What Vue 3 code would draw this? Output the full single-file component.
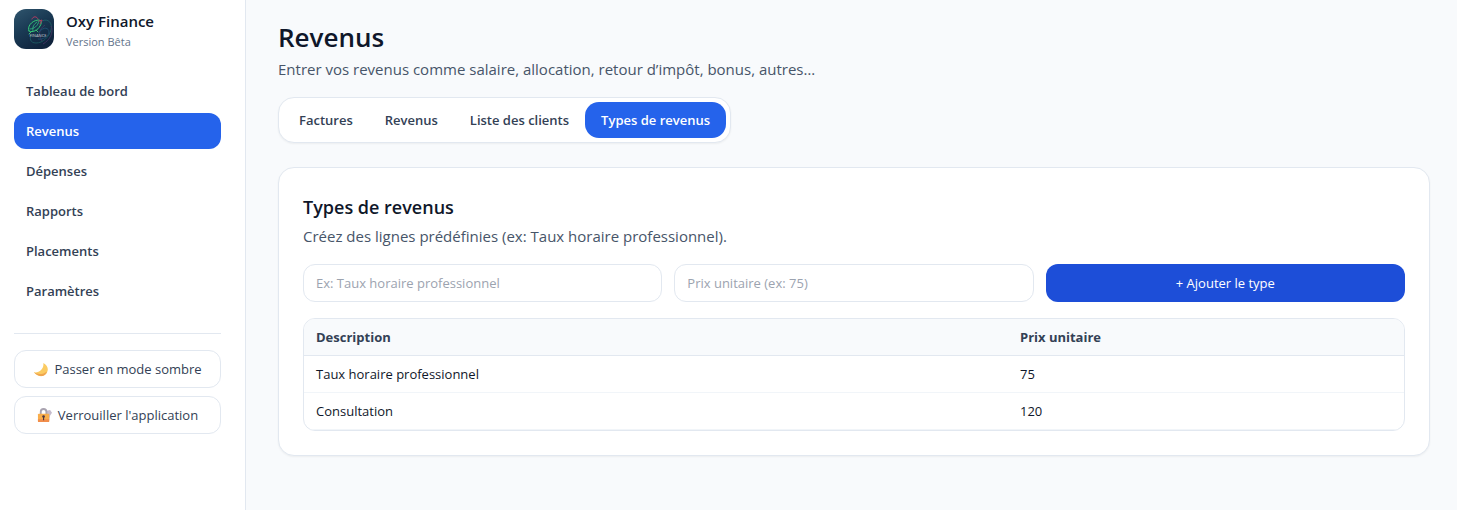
<script setup>
import { computed, ref } from 'vue'

const NAV_ITEMS = ['Tableau de bord', 'Revenus', 'Dépenses', 'Rapports', 'Placements', 'Paramètres']
const TABS = ['Factures', 'Revenus', 'Liste des clients', 'Types de revenus']

const activePage = ref('Revenus')
const activeTab = ref('Types de revenus')

const description = ref('')
const price = ref('')
const types = ref([
  { id: 1, description: 'Taux horaire professionnel', price: 75 },
  { id: 2, description: 'Consultation', price: 120 }
])

const nextId = computed(() => Math.max(0, ...types.value.map((t) => t.id)) + 1)

function addType() {
  const label = description.value.trim()
  if (!label) return
  types.value.push({ id: nextId.value, description: label, price: Number(price.value) || 0 })
  description.value = ''
  price.value = ''
}
</script>

<template>
  <div class="layout">
    <aside class="sidebar">
      <div class="brand">
        <svg class="brand-logo" viewBox="0 0 40 40" aria-hidden="true">
          <defs>
            <linearGradient id="logo-bg" x1="0" y1="0" x2="0.6" y2="1">
              <stop offset="0" stop-color="#2f556d" />
              <stop offset="0.5" stop-color="#1a3a54" />
              <stop offset="1" stop-color="#10243d" />
            </linearGradient>
          </defs>
          <rect width="40" height="40" fill="url(#logo-bg)" />
          <g fill="none" stroke-width="1" opacity="0.45">
            <path d="M28 12c6-3 11 2 9 9s-8 13-15 13c-6 0-7-5-4-9" stroke="#27887f" />
            <path d="M37 17c3 6-1 14-8 18M31 16c-6 4-7 10-3 16" stroke="#73407f" />
            <path d="M25 23c5-6 10-4 10 0s-6 8-11 7" stroke="#2775a0" />
          </g>
          <g fill="none" stroke-linecap="round">
            <path d="M15 22c-2-4 2-10 9-11 4 0 4 3 2 6-2 4-7 7-11 5z" stroke="#35c878" />
            <path d="M16 20c4 0 8-3 9-8M19 22c-1-4 1-7 4-9" stroke="#2fa97b" />
            <path d="M18 10c1-3 5-3 6 0M25 12l3-1-2 4" stroke="#b33c62" />
            <path d="M17 23l-2 2M22 21l2 2" stroke="#45bd70" />
          </g>
          <text x="24" y="28" class="logo-text">FINANCE</text>
        </svg>
        <div>
          <div class="brand-name">Oxy Finance</div>
          <div class="brand-version">Version Bêta</div>
        </div>
      </div>

      <nav class="nav">
        <a
          v-for="item in NAV_ITEMS"
          :key="item"
          href="#"
          :class="['nav-link', { active: item === activePage }]"
          @click.prevent="activePage = item"
        >{{ item }}</a>
      </nav>

      <div class="sidebar-actions">
        <button type="button" class="btn-outline">
          <svg class="emoji" viewBox="0 0 16 16" aria-hidden="true">
            <path d="M11 1c4 2 6 6 4 10-2 5-9 6-14 0 6 1 11-4 10-10z" fill="#fbcb62" />
            <path d="M1 11c5 3 10 2 14-1-2 6-9 7-14 1z" fill="#efa550" />
          </svg>
          <span>Passer en mode sombre</span>
        </button>
        <button type="button" class="btn-outline">
          <svg class="emoji" viewBox="0 0 16 16" aria-hidden="true">
            <path d="M10 3l4-1 2 3-2 3-1 5-3-3z" fill="#c5bccd" />
            <path d="M4 7V4a3 3 0 0 1 6 0v3" fill="none" stroke="#a9a3b0" stroke-width="2" />
            <rect x="1" y="6" width="12" height="9" rx="1" fill="#f9ae4c" />
            <path d="M1 12h12v2a1 1 0 0 1-1 1H2a1 1 0 0 1-1-1z" fill="#f28e4b" />
            <circle cx="7" cy="9" r="1.4" fill="#4b3541" />
            <path d="M6.4 9h1.2v4H6.4z" fill="#4b3541" />
          </svg>
          <span>Verrouiller l'application</span>
        </button>
      </div>
    </aside>

    <main class="main">
      <header>
        <h1>Revenus</h1>
        <p class="subtitle">Entrer vos revenus comme salaire, allocation, retour d’impôt, bonus, autres…</p>
      </header>

      <div class="tabs" role="tablist">
        <button
          v-for="tab in TABS"
          :key="tab"
          type="button"
          role="tab"
          :aria-selected="tab === activeTab"
          :class="['tab', { active: tab === activeTab }]"
          @click="activeTab = tab"
        >{{ tab }}</button>
      </div>

      <section class="card">
        <h2>Types de revenus</h2>
        <p class="subtitle">Créez des lignes prédéfinies (ex: Taux horaire professionnel).</p>

        <form class="type-form" @submit.prevent="addType">
          <input v-model="description" type="text" aria-label="Description" placeholder="Ex: Taux horaire professionnel" />
          <input v-model="price" type="text" inputmode="decimal" aria-label="Prix unitaire" placeholder="Prix unitaire (ex: 75)" />
          <button type="submit" class="btn-primary">+ Ajouter le type</button>
        </form>

        <div class="table-wrap">
          <table>
            <thead>
              <tr>
                <th scope="col" class="col-description">Description</th>
                <th scope="col">Prix unitaire</th>
              </tr>
            </thead>
            <tbody>
              <tr v-for="type in types" :key="type.id">
                <td>{{ type.description }}</td>
                <td>{{ type.price }}</td>
              </tr>
            </tbody>
          </table>
        </div>
      </section>
    </main>
  </div>
</template>

<style>
body {
  margin: 0;
  background: #f8fafc;
}
</style>

<style scoped>
.layout,
.layout * {
  box-sizing: border-box;
}

.layout {
  display: flex;
  min-height: 100vh;
  font-family: 'Segoe UI', 'Open Sans', 'Noto Sans', sans-serif;
  font-size: 13px;
  line-height: 20px;
  color: #0f172a;
}

button,
input {
  font: inherit;
}

button {
  cursor: pointer;
}

.sidebar {
  flex: 0 0 246px;
  padding: 8px 24px 24px 14px;
  background: #fff;
  border-right: 1px solid #e2e8f0;
}

.brand {
  display: flex;
  align-items: center;
  gap: 12px;
}

.brand-logo {
  width: 40px;
  height: 40px;
  border-radius: 12px;
}

.logo-text {
  font-size: 4px;
  font-weight: 600;
  text-anchor: middle;
  fill: #a9b8bd;
}

.brand-name {
  font-size: 15px;
  line-height: 26px;
  font-weight: 600;
}

.brand-version {
  font-size: 11px;
  line-height: 16px;
  color: #64748b;
}

.nav {
  display: flex;
  flex-direction: column;
  gap: 4px;
  margin-top: 23px;
}

.nav-link {
  padding: 8px 12px;
  border-radius: 12px;
  font-weight: 600;
  color: #334155;
  text-decoration: none;
}

.nav-link.active {
  background: #2563eb;
  color: #fff;
}

.sidebar-actions {
  display: flex;
  flex-direction: column;
  gap: 8px;
  margin-top: 24px;
  padding-top: 16px;
  border-top: 1px solid #e2e8f0;
}

.btn-outline {
  display: flex;
  align-items: center;
  justify-content: center;
  gap: 6px;
  padding: 8px 12px;
  border: 1px solid #e2e8f0;
  border-radius: 12px;
  background: #fff;
  color: #334155;
}

.emoji {
  width: 15px;
  height: 15px;
}

.main {
  flex: 1;
  min-width: 0;
  padding: 19px 27px 24px 32px;
}

h1 {
  margin: 0;
  font-size: 26px;
  line-height: 36px;
  font-weight: 600;
}

h2 {
  margin: 0;
  font-size: 18px;
  line-height: 30px;
  font-weight: 600;
}

.subtitle {
  margin: 2px 0 0;
  font-size: 15px;
  line-height: 24px;
  color: #475569;
}

.tabs {
  display: inline-flex;
  margin-top: 16px;
  padding: 4px;
  border: 1px solid #e2e8f0;
  border-radius: 16px;
  background: #fff;
  box-shadow: 0 1px 2px rgba(0, 0, 0, 0.05);
}

.tab {
  padding: 8px 16px;
  border: 0;
  border-radius: 14px;
  background: transparent;
  font-weight: 600;
  color: #334155;
}

.tab.active {
  background: #2563eb;
  color: #fff;
}

.card {
  margin-top: 24px;
  padding: 24px;
  border: 1px solid #e2e8f0;
  border-radius: 16px;
  background: #fff;
  box-shadow: 0 1px 2px rgba(0, 0, 0, 0.05);
}

.type-form {
  display: grid;
  grid-template-columns: repeat(3, 1fr);
  gap: 12px;
  margin-top: 16px;
}

.type-form input {
  min-width: 0;
  padding: 8px 12px;
  border: 1px solid #e2e8f0;
  border-radius: 12px;
  background: #fff;
  color: #0f172a;
}

.type-form input::placeholder {
  color: #9ca3af;
}

.btn-primary {
  padding: 8px 12px;
  border: 0;
  border-radius: 12px;
  background: #1d4ed8;
  color: #fff;
}

.table-wrap {
  margin-top: 16px;
  border: 1px solid #e2e8f0;
  border-radius: 12px;
  overflow: hidden;
}

table {
  width: 100%;
  border-collapse: separate;
  border-spacing: 0;
}

th,
td {
  padding: 8px 12px;
  text-align: left;
}

th {
  background: #f8fafc;
  border-bottom: 1px solid #e2e8f0;
  font-weight: 700;
  color: #334155;
}

td {
  border-bottom: 1px solid #f1f5f9;
}

.col-description {
  width: 64%;
}
</style>
